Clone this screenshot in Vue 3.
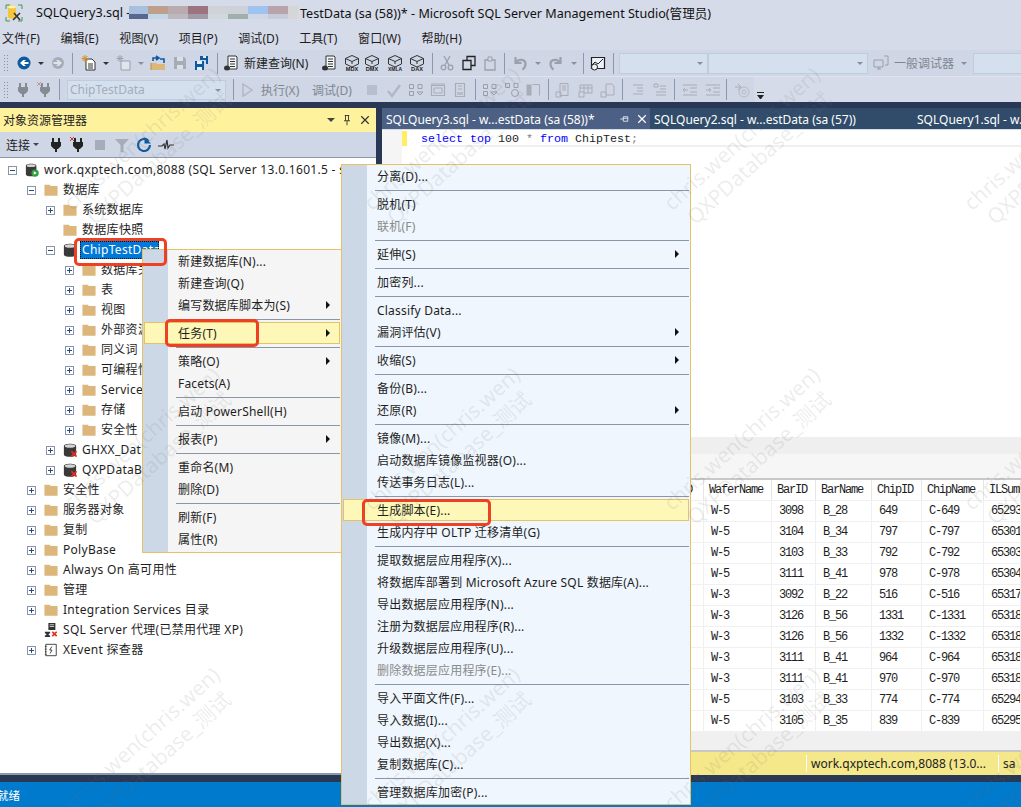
<template>
  <div class="ssms">
    <div class="titlebar">
      <svg class="app-icon" viewBox="0 0 18 18" v-html="icons.app"></svg>
      <span class="title-a">SQLQuery3.sql -</span>
      <span class="mosaic">
        <span v-for="(c, i) in mosaic" :key="i" class="mosaic-cell" :style="{ width: c[2] + 'px' }">
          <i :style="{ background: c[0] }"></i><i :style="{ background: c[1] }"></i>
        </span>
      </span>
      <span class="title-b">TestData (sa (58))* - Microsoft SQL Server Management Studio(管理员)</span>
    </div>

    <div class="menubar">
      <span v-for="m in mainMenu" :key="m">{{ m }}</span>
    </div>

    <div class="toolbar tb1">
      <template v-for="(item, i) in toolbar1" :key="i">
        <span v-if="item.t === 'grip'" class="grip"></span>
        <span v-else-if="item.t === 'sep'" class="tsep" :style="{ width: item.w + 'px' }"><b></b></span>
        <span v-else-if="item.t === 'drop'" class="tdrop" :class="{ off: item.off }" :style="{ width: item.w + 'px' }"></span>
        <span v-else-if="item.t === 'gap'" :style="{ width: item.w + 'px' }"></span>
        <span v-else-if="item.t === 'combo'" class="combo" :style="{ width: item.w + 'px' }"><em v-if="item.arrow"></em></span>
        <span v-else-if="item.t === 'label'" class="tlabel" :class="{ off: item.off }" :style="{ width: item.w + 'px' }">{{ item.text }}</span>
        <span v-else class="ticon" :class="{ off: item.off }" :style="{ width: item.w + 'px' }">
          <svg viewBox="0 0 16 16" v-html="icons[item.n]"></svg>
        </span>
      </template>
    </div>

    <div class="tb2-row">
      <div class="toolbar tb2">
        <template v-for="(item, i) in toolbar2" :key="i">
          <span v-if="item.t === 'grip'" class="grip"></span>
          <span v-else-if="item.t === 'sep'" class="tsep" :style="{ width: item.w + 'px' }"><b></b></span>
          <span v-else-if="item.t === 'gap'" :style="{ width: item.w + 'px' }"></span>
          <span v-else-if="item.t === 'combo'" class="combo db-combo" :style="{ width: item.w + 'px' }">ChipTestData<em></em></span>
          <span v-else-if="item.t === 'label'" class="tlabel off" :style="{ width: item.w + 'px' }">{{ item.text }}</span>
          <span v-else class="ticon off" :style="{ width: item.w + 'px' }">
            <svg viewBox="0 0 16 16" v-html="icons[item.n]"></svg>
          </span>
        </template>
      </div>
      <span class="overflow-btn"></span>
    </div>

    <div class="band-top"></div>

    <div class="main">
      <section class="explorer">
        <header class="ex-head">
          <span>对象资源管理器</span>
          <span class="ex-tools">
            <i class="mini-drop"></i>
            <svg viewBox="0 0 16 16" v-html="icons.pin"></svg>
            <svg viewBox="0 0 16 16" v-html="icons.close"></svg>
          </span>
        </header>
        <div class="ex-bar">
          <span class="ex-connect">连接</span>
          <i class="mini-drop small"></i>
          <span v-for="b in explorerBar" :key="b.n" class="ticon" :class="{ off: b.off }" :style="{ width: b.w + 'px' }">
            <svg viewBox="0 0 16 16" v-html="icons[b.n]"></svg>
          </span>
        </div>
        <div class="tree">
          <div v-for="row in tree" :key="row.text" class="tree-row" :style="{ paddingLeft: 8 + row.level * 19 + 'px' }">
            <span class="exp" :class="row.exp"></span>
            <svg class="tree-icon" viewBox="0 0 16 16" v-html="icons[row.icon || 'folder']"></svg>
            <span class="tree-text" :class="{ selected: row.selected }">{{ row.text }}</span>
          </div>
        </div>
      </section>

      <section class="doc">
        <div class="tabs">
          <div class="tab active">
            <span>SQLQuery3.sql - w...estData (sa (58))*</span>
            <svg viewBox="0 0 16 16" v-html="icons.pinSide"></svg>
            <svg viewBox="0 0 16 16" v-html="icons.closeWhite"></svg>
          </div>
          <div class="tab t2"><span>SQLQuery2.sql - w...estData (sa (57))</span></div>
          <div class="tab t3"><span>SQLQuery1.sql - w...estData (sa (56))</span></div>
        </div>
        <div class="editor">
          <div class="margin"><i></i></div>
          <div class="code-wrap">
            <div class="code"><b>select</b> <b>top</b> 100 <u>*</u> <b>from</b> ChipTest<u>;</u></div>
          </div>
        </div>
        <div class="results">
          <div class="res-tabs"></div>
          <div class="res-msg"></div>
          <div class="grid">
            <div class="grid-row head">
              <span class="first">ID</span>
              <span v-for="h in gridHead" :key="h">{{ h }}</span>
            </div>
            <div v-for="(r, i) in gridRows" :key="i" class="grid-row">
              <span class="first"></span>
              <span v-for="(c, j) in r" :key="j">{{ c }}</span>
            </div>
          </div>
          <div class="res-foot"></div>
        </div>
        <div class="qstatus">
          <span class="q-conn">work.qxptech.com,8088 (13.0...</span>
          <span class="q-user">sa</span>
        </div>
      </section>
    </div>

    <div class="band-bottom"></div>
    <div class="statusbar">就绪</div>

    <div class="menu menu-db">
      <template v-for="(m, i) in dbMenu" :key="i">
        <div v-if="m === '-'" class="mi-sep"></div>
        <div v-else class="mi" :class="{ hot: m.hot }">
          <span>{{ m.text }}</span><i v-if="m.sub"></i>
        </div>
      </template>
    </div>

    <div class="menu menu-task">
      <template v-for="(m, i) in taskMenu" :key="i">
        <div v-if="m === '-'" class="mi-sep"></div>
        <div v-else class="mi" :class="{ hot: m.hot, off: m.off }">
          <span>{{ m.text }}</span><i v-if="m.sub"></i>
        </div>
      </template>
    </div>

    <div class="mark m1"></div>
    <div class="mark m2"></div>
    <div class="mark m3"></div>

    <div class="marks">
      <div v-for="w in watermarks" :key="w.x + '-' + w.y" class="wm" :style="{ left: w.x + 'px', top: w.y + 'px' }">
        <div>chris.wen(chris.wen)</div>
        <div>QXPDatabase_测试</div>
      </div>
    </div>
  </div>
</template>

<script setup>
const cube = (label) => `<path d="M8 .5 1.500 3.500v5.500l6.500 3 6.500-3V3.500z" fill="none" stroke="#333"/><path d="M1.500 3.500 8 6.500l6.500-3M8 6.500V9" fill="none" stroke="#333"/><text x="8" y="16" text-anchor="middle" font-family="Liberation Sans" font-weight="700" font-size="${label.length > 3 ? 5 : 5.6}" fill="#222">${label}</text>`
const plug = '<path d="M5 1v4M11 1v4" stroke="#222" stroke-width="2"/><path d="M3 5h10v4l-3 3H6L3 9z" fill="#222"/><path d="M7 12h2v3H7z" fill="#222"/>'

const icons = {
  app: '<path d="M1 1h4M1 1v4M13 1h4M17 1v4M1 13v4h4M17 13v4h-4" fill="none" stroke="#3f9b3f" stroke-width="1"/><path d="M3 3c0-2 8-2 8 0v10c0 2-8 2-8 0z" fill="#f6c53c"/><ellipse cx="7" cy="3" rx="4" ry="1.3" fill="#fff2b5"/><path d="M8 16l7-7M9 9l6 7" stroke="#333" stroke-width="1.6"/>',
  back: '<circle cx="8" cy="8" r="6.5" fill="#0e5a9e"/><path d="M12.5 7H8l2-2H7.4L4 8l3.4 3H10L8 9h4.5z" fill="#fff"/>',
  forward: '<circle cx="8" cy="8" r="6" fill="#9aa0aa"/><path d="M3.5 7H8L6 5h2.6L12 8l-3.4 3H6l2-2H3.5z" fill="#e8e8e8"/>',
  newproj: '<path d="M5 4h6l3 3v8H5z" fill="#fff" stroke="#333"/><path d="M7 9h5M7 11h5M7 13h5" stroke="#333"/><path d="M4 0v7M.5 3.500h7M1.500 1l5 5M6.500 1l-5 5" stroke="#d98b1c"/>',
  newgray: '<path d="M5 6h9v9H5z" fill="#e6e9f0" stroke="#8a8f99"/><path d="M4 0v7M.5 3.500h7M1.500 1l5 5M6.500 1l-5 5" stroke="#8a8f99"/>',
  open: '<path d="M1 8h5l1 1h8v6H1z" fill="#dcb67a"/><path d="M1 8v7" stroke="#b9914f"/><path d="M3 6V3h6M6 1 9 3 6 5" fill="none" stroke="#0e5a9e" stroke-width="1.6"/><path d="M10 4h4v4" fill="none" stroke="#0e5a9e" stroke-width="1.6"/>',
  save: '<path d="M2 2h10l2 2v10H2z" fill="#9aa0aa"/><path d="M5 2h6v4H5zM5 10h6v4H5z" fill="#e0e3ea"/>',
  saveall: '<path d="M6 1h8v8H12V5H6z" fill="#0e5a9e"/><path d="M1 6h9v9H1z" fill="#0e5a9e"/><path d="M3 6h5v3H3zM3 12h5v3H3z" fill="#e8ecf5"/><path d="M9 1h3v2H9z" fill="#e8ecf5"/>',
  query: '<path d="M5 1h8l1 1v12H5z" fill="#f4f6fa" stroke="#333"/><path d="M7 4h5M7 6.500h5M7 9h5M7 11.500h5" stroke="#333"/><ellipse cx="4" cy="13" rx="3" ry="2.500" fill="#333"/>',
  mdx: cube('MDX'), dmx: cube('DMX'), xmla: cube('XMLA'), dax: cube('DAX'),
  cut: '<path d="M5 1l5 9M11 1 6 10" stroke="#8a8f99" stroke-width="1.3" fill="none"/><circle cx="4.500" cy="12.500" r="2.300" fill="none" stroke="#8a8f99" stroke-width="1.300"/><circle cx="11.500" cy="12.500" r="2.300" fill="none" stroke="#8a8f99" stroke-width="1.300"/>',
  copy: '<path d="M6 1.500h8v9H6z" fill="none" stroke="#222" stroke-width="1.300"/><path d="M2 5.500h8v9H2z" fill="#d0d7e5" stroke="#222" stroke-width="1.300"/>',
  paste: '<path d="M3 5h10v10H3z" fill="none" stroke="#8a8f99" stroke-width="1.300"/><path d="M6 2h4v4H6z" fill="#d0d7e5" stroke="#8a8f99"/>',
  undo: '<path d="M3.500 2v6h6" fill="none" stroke="#8a8f99" stroke-width="2.200"/><path d="M4 8C6 3.500 13.500 4 13.500 9c0 2-1 4-3 5.500" fill="none" stroke="#8a8f99" stroke-width="2.200"/>',
  redo: '<path d="M12.500 2v6h-6" fill="none" stroke="#8a8f99" stroke-width="2.200"/><path d="M12 8C10 3.500 2.500 4 2.500 9c0 2 1 4 3 5.500" fill="none" stroke="#8a8f99" stroke-width="2.200"/>',
  monitor: '<path d="M1.500 2.500h13v11h-13z" fill="#eef1f7" stroke="#222" stroke-width="1.200"/><path d="M2 10l3-3 3 2 5-5" fill="none" stroke="#222"/><circle cx="4.500" cy="12" r="3" fill="#eef1f7" stroke="#222"/>',
  debugpc: '<path d="M1 5h9v7H1z" fill="none" stroke="#8a8f99"/><path d="M4 14h4M6 12v2" stroke="#8a8f99"/><path d="M11 1h4v9h-3" fill="none" stroke="#8a8f99"/>',
  plug,
  plugx: plug + '<path d="M0 0l4 4M4 0 0 4" stroke="#c0392b"/>',
  play: '<path d="M4 2l9 6-9 6z" fill="none" stroke="#8a8f99" stroke-width="1.500"/>',
  stop: '<path d="M3 3h10v10H3z" fill="#9aa0aa"/>',
  check: '<path d="M2 9l4 5 8-11" fill="none" stroke="#8a8f99" stroke-width="2.400"/>',
  tree1: '<path d="M1.500 2.500h4v4h-4zM10 2.500h4v4h-4zM1.500 9.500h4v4h-4z" fill="none" stroke="#555"/><path d="M9 10l3 3 3-3z" fill="none" stroke="#555"/>',
  win: '<path d="M1.500 3.500h13v10h-13z" fill="none" stroke="#777" stroke-width="1.200"/><path d="M4 6h8v5H4z" fill="none" stroke="#777"/><path d="M1 2h14" stroke="#777"/>',
  page: '<path d="M3.500 1.500h9v13h-9z" fill="none" stroke="#777" stroke-width="1.200"/><path d="M6 4h4M6 7h4" stroke="#777"/><path d="M5 10h6v3H5z" fill="#999"/>',
  treeC: '<path d="M1.500 1.500h4v4h-4zM10 1.500h4v4h-4z" fill="none" stroke="#555"/><circle cx="11" cy="11" r="3.500" fill="none" stroke="#555"/>',
  table: '<path d="M1.500 2.500h5v11h-5z" fill="#777"/><path d="M7.500 2.500h7v11" fill="none" stroke="#777"/>',
  qdoc: '<path d="M5 1.500h8v12H5z" fill="none" stroke="#777"/><path d="M7 4h4M7 6h4M7 8h4" stroke="#777"/><path d="M1 10h5v5H1z" fill="none" stroke="#777"/>',
  qgrid: '<path d="M2 3h12v8H2z" fill="none" stroke="#777"/><path d="M2 6h12M6 3v8M10 3v8" stroke="#777"/><path d="M1 10h5v5H1z" fill="#d0d7e5" stroke="#777"/>',
  qfile: '<path d="M6 2h6l2 2v9H6z" fill="none" stroke="#777"/><path d="M1 10h5v5H1z" fill="#d0d7e5" stroke="#777"/>',
  lines: '<path d="M3 3h10M7 6h6M7 9h6M3 12h10" stroke="#777"/>',
  lines2: '<path d="M2 2h4v3H2zM8 4h6M8 7h6M4 10h10M4 13h10" stroke="#777" fill="none"/>',
  indentL: '<path d="M1 3h14M1 13h14M8 6h7M8 10h7" stroke="#777"/><path d="M6 8H1m2-2L1 8l2 2" fill="none" stroke="#777"/>',
  indentR: '<path d="M1 3h14M1 13h14M8 6h7M8 10h7" stroke="#777"/><path d="M1 8h5M4 6l2 2-2 2" fill="none" stroke="#777"/>',
  at: '<path d="M1 5h5M4 2l3 3-3 3" fill="none" stroke="#777"/><circle cx="10" cy="10" r="5" fill="none" stroke="#999"/><circle cx="10" cy="10" r="2" fill="none" stroke="#999"/>',
  pin: '<path d="M5 2h6M6 2v7M10 2v7M4 9h8M8 9v6" fill="none" stroke="#333" stroke-width="1.200"/>',
  pinSide: '<path d="M3 8h4M7 5v6h6V5zM7 7h6" fill="none" stroke="#fff"/>',
  close: '<path d="M3 3l10 10M13 3 3 13" stroke="#333" stroke-width="1.600"/>',
  closeWhite: '<path d="M3 3l10 10M13 3 3 13" stroke="#fff" stroke-width="1.600"/>',
  funnel: '<path d="M1 2h14L9.500 8v7h-3V8z" fill="#9aa0aa"/>',
  refresh: '<path d="M12.500 4A6 6 0 1 0 14 8" fill="none" stroke="#0e5a9e" stroke-width="2.200"/><path d="M8.500 0v6.500H15z" fill="#0e5a9e"/>',
  pulse: '<path d="M0 9h4l2-2 1 5 2-9 1 8 2-3h4" fill="none" stroke="#333" stroke-width="1.200"/>',
  folder: '<path d="M.5 2h6l1.500 1.500h7.500v11H.5z" fill="#dcb67a"/>',
  db: '<path d="M1 3.500C1 0 15 0 15 3.500v9.500c0 3.500-14 3.500-14 0z" fill="#3a3a3a"/><ellipse cx="8" cy="3.500" rx="6" ry="2" fill="#d4d4d4"/>',
  dbx: '<path d="M1 3.500C1 0 15 0 15 3.500v9.500c0 3.500-14 3.500-14 0z" fill="#3a3a3a"/><ellipse cx="8" cy="3.500" rx="6" ry="2" fill="#d4d4d4"/><path d="M9.500 9.500l6 6M15.500 9.500l-6 6" stroke="#e0301e" stroke-width="2"/>',
  server: '<path d="M1 3C1 0 13 0 13 3v10c0 3-12 3-12 0z" fill="#3a3a3a"/><ellipse cx="7" cy="3" rx="5" ry="1.700" fill="#d4d4d4"/><circle cx="11.500" cy="11.500" r="4.200" fill="#2e9e3e"/><path d="M10 9.500l3.500 2-3.500 2z" fill="#fff"/>',
  agent: '<path d="M5 0h8v8H5z" fill="#333"/><path d="M6.500 2h5M6.500 4h5" stroke="#ddd"/><path d="M1 10h6v1.500L5 13l2 1.500V16H1v-1.500L3 13l-2-1.500z" fill="#333"/><path d="M9.500 10l5 5M14.500 10l-5 5" stroke="#e0301e" stroke-width="2"/>',
  xevent: '<path d="M2 1.500h12v13H2z" fill="#fff" stroke="#333"/><path d="M1 4h2M1 7h2M1 10h2M1 13h2" stroke="#333"/><path d="M9 4 6.500 8H9l-2 4" fill="none" stroke="#333"/>',
}

const mosaic = [
  ['#a9bfe0', '#55698f', 19], ['#be9f8c', '#c3d6e5', 20], ['#b9abb0', '#bcb8bd', 20], ['#9c7481', '#a39aa8', 20],
  ['#cfd3d8', '#d0d8dc', 20], ['#cdd2d8', '#9fb0aa', 20], ['#9dc3ee', '#cfd6e7', 20], ['#b8a5ac', '#c8cbd8', 20],
  ['#d6d6d6', '#d6d6d6', 10],
]

const mainMenu = ['文件(F)', '编辑(E)', '视图(V)', '项目(P)', '调试(D)', '工具(T)', '窗口(W)', '帮助(H)']

const I = (n, w, off) => ({ t: 'i', n, w, off })
const S = (w) => ({ t: 'sep', w })
const G = (w) => ({ t: 'gap', w })
const D = (w, off) => ({ t: 'drop', w, off })

const toolbar1 = [
  { t: 'grip' }, I('back', 22), D(12), I('forward', 22, true), S(6), I('newproj', 27), D(8),
  I('newgray', 28, true), D(6, true), I('open', 28), I('save', 16, true), I('saveall', 28), S(2),
  I('query', 26), { t: 'label', text: '新建查询(N)', w: 67 }, I('query', 36), I('mdx', 10), I('dmx', 30), I('xmla', 16),
  I('dax', 28), S(2), I('cut', 28, true), I('copy', 16), I('paste', 26, true), S(2),
  I('undo', 30, true), D(6, true), I('redo', 30, true), D(6, true), S(12), I('monitor', 18), S(12),
  G(2), { t: 'combo', w: 89, arrow: true }, G(7), { t: 'combo', w: 160, arrow: true },
  I('debugpc', 26, true), { t: 'label', text: '一般调试器', w: 61, off: true }, D(18, true), { t: 'combo', w: 60 },
]

const toolbar2 = [
  { t: 'grip' }, I('plug', 20), I('plugx', 24), S(4), G(6), { t: 'combo', w: 159 }, S(14), I('play', 14),
  G(7), { t: 'label', text: '执行(X)', w: 39 }, G(12), { t: 'label', text: '调试(D)', w: 40 }, G(9),
  I('stop', 22), I('check', 22), I('tree1', 22), I('win', 22), I('page', 22), S(8),
  I('tree1', 22), I('treeC', 22), I('table', 20), S(10), I('qdoc', 20), I('qgrid', 26), I('qfile', 18), S(10),
  I('lines', 22), I('lines2', 22), S(6), I('indentL', 26), I('indentR', 20), S(6), I('at', 25),
]

const explorerBar = [
  { n: 'plug', w: 22 }, { n: 'plugx', w: 22 }, { n: 'stop', w: 22, off: true },
  { n: 'funnel', w: 22, off: true }, { n: 'refresh', w: 22 }, { n: 'pulse', w: 22 },
]

const tree = [
  { level: 0, exp: 'minus', icon: 'server', text: 'work.qxptech.com,8088 (SQL Server 13.0.1601.5 - sa)' },
  { level: 1, exp: 'minus', text: '数据库' },
  { level: 2, exp: 'plus', text: '系统数据库' },
  { level: 2, exp: '', text: '数据库快照' },
  { level: 2, exp: 'minus', icon: 'db', text: 'ChipTestData', selected: true },
  { level: 3, exp: 'plus', text: '数据库关系图' },
  { level: 3, exp: 'plus', text: '表' },
  { level: 3, exp: 'plus', text: '视图' },
  { level: 3, exp: 'plus', text: '外部资源' },
  { level: 3, exp: 'plus', text: '同义词' },
  { level: 3, exp: 'plus', text: '可编程性' },
  { level: 3, exp: 'plus', text: 'Service Broker' },
  { level: 3, exp: 'plus', text: '存储' },
  { level: 3, exp: 'plus', text: '安全性' },
  { level: 2, exp: 'plus', icon: 'dbx', text: 'GHXX_Data' },
  { level: 2, exp: 'plus', icon: 'dbx', text: 'QXPDataBase' },
  { level: 1, exp: 'plus', text: '安全性 ' },
  { level: 1, exp: 'plus', text: '服务器对象' },
  { level: 1, exp: 'plus', text: '复制' },
  { level: 1, exp: 'plus', text: 'PolyBase' },
  { level: 1, exp: 'plus', text: 'Always On 高可用性' },
  { level: 1, exp: 'plus', text: '管理' },
  { level: 1, exp: 'plus', text: 'Integration Services 目录' },
  { level: 1, exp: '', icon: 'agent', text: 'SQL Server 代理(已禁用代理 XP)' },
  { level: 1, exp: 'plus', icon: 'xevent', text: 'XEvent 探查器' },
]

const dbMenu = [
  { text: '新建数据库(N)...' }, { text: '新建查询(Q)' }, { text: '编写数据库脚本为(S)', sub: true }, '-',
  { text: '任务(T)', sub: true, hot: true }, '-',
  { text: '策略(O)', sub: true }, { text: 'Facets(A)' }, '-',
  { text: '启动 PowerShell(H)' }, '-',
  { text: '报表(P)', sub: true }, '-',
  { text: '重命名(M)' }, { text: '删除(D)' }, '-',
  { text: '刷新(F)' }, { text: '属性(R)' },
]

const taskMenu = [
  { text: '分离(D)...' }, '-',
  { text: '脱机(T)' }, { text: '联机(F)', off: true }, '-',
  { text: '延伸(S)', sub: true }, '-',
  { text: '加密列...' }, '-',
  { text: 'Classify Data...' }, { text: '漏洞评估(V)', sub: true }, '-',
  { text: '收缩(S)', sub: true }, '-',
  { text: '备份(B)...' }, { text: '还原(R)', sub: true }, '-',
  { text: '镜像(M)...' }, { text: '启动数据库镜像监视器(O)...' }, { text: '传送事务日志(L)...' }, '-',
  { text: '生成脚本(E)...', hot: true }, { text: '生成内存中 OLTP 迁移清单(G)' }, '-',
  { text: '提取数据层应用程序(X)...' }, { text: '将数据库部署到 Microsoft Azure SQL 数据库(A)...' },
  { text: '导出数据层应用程序(N)...' }, { text: '注册为数据层应用程序(R)...' }, { text: '升级数据层应用程序(U)...' },
  { text: '删除数据层应用程序(E)...', off: true }, '-',
  { text: '导入平面文件(F)...' }, { text: '导入数据(I)...' }, { text: '导出数据(X)...' }, { text: '复制数据库(C)...' }, '-',
  { text: '管理数据库加密(P)...' },
]

const gridHead = ['WaferName', 'BarID', 'BarName', 'ChipID', 'ChipName', 'ILSummary']
const gridRows = [
  ['W-5', '3098', 'B_28', '649', 'C-649', '65293'],
  ['W-5', '3104', 'B_34', '797', 'C-797', '65301'],
  ['W-5', '3103', 'B_33', '792', 'C-792', '65303'],
  ['W-5', '3111', 'B_41', '978', 'C-978', '65304'],
  ['W-3', '3092', 'B_22', '516', 'C-516', '65317'],
  ['W-3', '3126', 'B_56', '1331', 'C-1331', '65318'],
  ['W-3', '3126', 'B_56', '1332', 'C-1332', '65318'],
  ['W-3', '3111', 'B_41', '964', 'C-964', '65318'],
  ['W-3', '3111', 'B_41', '970', 'C-970', '65318'],
  ['W-5', '3103', 'B_33', '774', 'C-774', '65294'],
  ['W-5', '3105', 'B_35', '839', 'C-839', '65295'],
]

const watermarks = []
for (const y of [148, 448, 748]) {
  for (const x of [150, 450, 750, 1050]) watermarks.push({ x, y })
}
</script>

<style>
html, body {
  margin: 0;
  overflow: hidden;
}
</style>

<style scoped>
.ssms {
  position: relative;
  width: 1021px;
  height: 807px;
  overflow: hidden;
  display: flex;
  flex-direction: column;
  background: #d6dbe9;
  color: #1e1e1e;
  font-family: "Noto Sans", "Noto Sans CJK SC", sans-serif;
  font-size: 12px;
}

.titlebar {
  height: 25px;
  display: flex;
  align-items: center;
  flex-shrink: 0;
  font-size: 12.6px;
  color: #111;
}

.app-icon {
  width: 18px;
  height: 18px;
  margin: 0 13px 0 5px;
}

.title-a {
  white-space: pre;
  width: 93px;
}

.mosaic {
  display: flex;
  height: 13px;
}

.mosaic-cell {
  display: flex;
  flex-direction: column;
}

.mosaic-cell i:first-child {
  height: 8px;
}

.mosaic-cell i:last-child {
  height: 5px;
}

.title-b {
  white-space: pre;
  margin-left: 2px;
}

.menubar {
  height: 25px;
  display: flex;
  align-items: center;
  gap: 20.500px;
  padding-left: 2px;
  flex-shrink: 0;
  letter-spacing: 0.1px;
}

.toolbar {
  display: flex;
  align-items: center;
  background: #cfd6e5;
  flex-shrink: 0;
}

.tb1 {
  height: 26px;
  border-bottom: 1px solid #dfe3ee;
}

.tb2-row {
  height: 25px;
  display: flex;
  flex-shrink: 0;
}

.tb2 {
  width: 754px;
  height: 25px;
}

.overflow-btn {
  width: 7px;
  height: 6px;
  margin: 15px 0 0 3px;
  border-top: 1px solid #222;
}

.overflow-btn::after {
  content: "";
  display: block;
  margin-top: 2px;
  border-left: 3.500px solid transparent;
  border-right: 3.500px solid transparent;
  border-top: 4px solid #222;
}

.grip {
  width: 6px;
  height: 18px;
  margin: 0 4px 0 3px;
  flex-shrink: 0;
  background: radial-gradient(circle, #8a93a5 0.8px, transparent 1px) 0 0 / 3px 3px;
}

.tsep {
  display: flex;
  justify-content: center;
  height: 21px;
  flex-shrink: 0;
}

.tsep b {
  width: 1px;
  height: 100%;
  flex-shrink: 0;
  background: #8d98ad;
}

.ticon {
  display: flex;
  justify-content: center;
  flex-shrink: 0;
}

.ticon svg {
  width: 16px;
  height: 16px;
  flex-shrink: 0;
}

.ticon.off svg {
  opacity: 0.75;
}

.tb2 .ticon.off svg {
  opacity: 0.42;
}

.tdrop {
  display: flex;
  justify-content: center;
  flex-shrink: 0;
}

.tdrop::before {
  content: "";
  border-left: 3px solid transparent;
  border-right: 3px solid transparent;
  border-top: 3px solid #333;
}

.tdrop.off::before {
  border-top-color: #8a8f99;
}

.tlabel {
  flex-shrink: 0;
  white-space: nowrap;
}

.tlabel.off {
  color: #808691;
}

.combo {
  height: 21px;
  flex-shrink: 0;
  position: relative;
  box-sizing: border-box;
  border: 1px solid #bfccdd;
  background: #d5e0ee;
  color: #a4acb8;
  line-height: 19px;
  padding-left: 2px;
}

.combo em {
  position: absolute;
  right: 4px;
  top: 8px;
  border-left: 3px solid transparent;
  border-right: 3px solid transparent;
  border-top: 3px solid #8a8f99;
}

.tb2 .combo {
  height: 20px;
  line-height: 18px;
}

.band-top {
  height: 6px;
  background: #293955;
  flex-shrink: 0;
}

.main {
  height: 667px;
  display: flex;
  gap: 6px;
  background: #293955;
  flex-shrink: 0;
}

.explorer {
  width: 376px;
  display: flex;
  flex-direction: column;
  flex-shrink: 0;
}

.ex-head {
  height: 24px;
  display: flex;
  align-items: center;
  justify-content: space-between;
  padding: 0 3px;
  box-sizing: border-box;
  background: #fff29d;
  flex-shrink: 0;
}

.ex-tools {
  display: flex;
  align-items: center;
  gap: 6px;
  padding-right: 2px;
}

.ex-tools svg {
  width: 12px;
  height: 12px;
}

.mini-drop {
  border-left: 4px solid transparent;
  border-right: 4px solid transparent;
  border-top: 4px solid #444;
}

.mini-drop.small {
  border-left-width: 3px;
  border-right-width: 3px;
  border-top-width: 3px;
  margin: 0 6px 0 3px;
}

.ex-bar {
  height: 26px;
  display: flex;
  align-items: center;
  box-sizing: border-box;
  padding-left: 6px;
  background: #cfd6e5;
  border-bottom: 1px solid #8d98ad;
  flex-shrink: 0;
}

.tree {
  flex: 1;
  background: #fff;
  padding-top: 2px;
  overflow: hidden;
  border-bottom: 2px solid #8d98ad;
}

.tree-row {
  height: 20px;
  display: flex;
  align-items: center;
  white-space: nowrap;
}

.exp {
  width: 9px;
  height: 9px;
  margin-right: 8px;
  flex-shrink: 0;
  box-sizing: border-box;
}

.exp.plus,
.exp.minus {
  border: 1px solid #8794ac;
  background: linear-gradient(#2c4a78, #2c4a78) center / 5px 1px no-repeat, #fff;
}

.exp.plus {
  background: linear-gradient(#2c4a78, #2c4a78) center / 5px 1px no-repeat,
    linear-gradient(#2c4a78, #2c4a78) center / 1px 5px no-repeat, #fff;
}

.tree-icon {
  width: 14px;
  height: 14px;
  flex-shrink: 0;
  margin-right: 3px;
}

.tree-text {
  padding: 0 2px;
  line-height: 18px;
  letter-spacing: 0.3px;
}

.tree-text.selected {
  background: #0078d7;
  color: #fff;
  outline: 1px dotted #111;
  outline-offset: -1px;
  width: 75px;
  overflow: hidden;
}

.doc {
  flex: 1;
  min-width: 0;
  display: flex;
  flex-direction: column;
  background: #fff;
}

.tabs {
  height: 21px;
  display: flex;
  background: #304c6a;
  color: #fff;
  flex-shrink: 0;
}

.tab {
  display: flex;
  align-items: center;
  white-space: nowrap;
  flex-shrink: 0;
  padding: 1px 0 0 4px;
  box-sizing: border-box;
}

.tab svg {
  width: 12px;
  height: 12px;
}

.tab.active {
  width: 268px;
  background: #4b6084;
}

.tab.active span {
  width: 232px;
}

.tab.active svg + svg {
  margin-left: 6px;
}

.tab.t2 {
  width: 263px;
}

.editor {
  height: 307px;
  display: flex;
  flex-shrink: 0;
  border-top: 1px solid #d6dbe9;
}

.margin {
  width: 20px;
  background: #f5f5f5;
  flex-shrink: 0;
}

.margin i {
  display: block;
  width: 5px;
  height: 15px;
  margin: 1px 0 0 20px;
  background: #ffee62;
}

.code-wrap {
  flex: 1;
  padding-left: 19px;
}

.code {
  height: 14px;
  margin-top: 1px;
  border-bottom: 2px solid #eef1f0;
  font-family: "Liberation Mono", monospace;
  font-size: 11.67px;
  line-height: 17px;
  color: #222;
  white-space: pre;
}

.code b {
  font-weight: 400;
  color: #0000ff;
}

.code u {
  text-decoration: none;
  color: #808080;
}

.results {
  flex: 1;
  min-height: 0;
  display: flex;
  flex-direction: column;
}

.res-tabs {
  height: 17px;
  background: #efefef;
  flex-shrink: 0;
}

.res-msg {
  height: 26px;
  background: #f6f6f6;
  border-bottom: 2px solid #c8c8c8;
  box-sizing: border-box;
  flex-shrink: 0;
}

.grid {
  flex-shrink: 0;
  font-family: "Liberation Mono", monospace;
  font-size: 12px;
  letter-spacing: -1.2px;
  color: #1e1e1e;
}

.grid-row {
  height: 21px;
  display: grid;
  grid-template-columns: 322px 68px 44px 56px 50px 62px 1fr;
  box-sizing: border-box;
  border-bottom: 1px solid #f0f0f0;
}

.grid-row span {
  padding-left: 7px;
  line-height: 20px;
  border-right: 1px solid #f0f0f0;
  white-space: nowrap;
  overflow: hidden;
}

.grid-row.head span {
  padding-left: 5px;
  border-right-color: #e6e6e6;
}

.grid-row span.first {
  text-align: right;
  padding: 0 11px 0 0;
}

.res-foot {
  height: 18px;
  background: #f0f0f0;
  border-bottom: 2px solid #c8c8c8;
  flex-shrink: 0;
}

.qstatus {
  height: 23px;
  margin-top: 2px;
  display: flex;
  align-items: center;
  background: #f5e88a;
  flex-shrink: 0;
  color: #222;
  padding-left: 424px;
}

.q-conn {
  width: 192px;
  padding-left: 4px;
  box-sizing: border-box;
  border-left: 1px solid #fdfdfd;
  white-space: nowrap;
}

.q-user {
  padding-left: 4px;
  border-left: 1px solid #fdfdfd;
}

.band-bottom {
  height: 7px;
  background: #293955;
  flex-shrink: 0;
}

.statusbar {
  flex: 1;
  background: #007acc;
  color: #fff;
  line-height: 27px;
  text-indent: -3px;
  font-size: 11.5px;
}

.menu {
  position: absolute;
  box-sizing: border-box;
  border: 1px solid #e5c365;
  background: linear-gradient(#ccd8e6, #ccd8e6) no-repeat 0 0 / 25px 100%, #f5f5f5;
}

.menu-db {
  left: 142px;
  top: 249px;
  width: 200px;
  height: 304px;
}

.menu-task {
  left: 341px;
  top: 164px;
  width: 350px;
  height: 641px;
  background: linear-gradient(#ccd8e6, #ccd8e6) no-repeat 0 0 / 25px 100%, #eff6fd;
}

.mi {
  height: 22px;
  margin: 0 1px;
  padding-left: 34px;
  box-sizing: border-box;
  display: flex;
  align-items: center;
  justify-content: space-between;
  white-space: nowrap;
  letter-spacing: 0.2px;
}

.mi i {
  margin-right: 10px;
  border-top: 4px solid transparent;
  border-bottom: 4px solid transparent;
  border-left: 4px solid #111;
}

.mi.off {
  color: #8a8a8a;
}

.mi.hot {
  background: #fdf8b8;
  outline: 1px solid #e5c365;
  outline-offset: -1px;
}

.mi-sep {
  height: 6px;
  margin-left: 33px;
  margin-right: 1px;
  background: linear-gradient(#8b97a8, #8b97a8) no-repeat 0 center / 100% 1px;
}

.mark {
  position: absolute;
  box-sizing: border-box;
  border: 3px solid #ee4022;
  border-radius: 5px;
}

.m1 {
  left: 74px;
  top: 238px;
  width: 93px;
  height: 28px;
}

.m2 {
  left: 165px;
  top: 319px;
  width: 94px;
  height: 28px;
}

.m3 {
  left: 362px;
  top: 499px;
  width: 129px;
  height: 27px;
}

.marks {
  position: absolute;
  inset: 0;
  pointer-events: none;
}

.wm {
  position: absolute;
  width: 260px;
  margin: -26px 0 0 -130px;
  transform: rotate(-42deg);
  text-align: center;
  font-size: 21px;
  line-height: 26px;
  color: rgba(110, 110, 110, 0.13);
  white-space: nowrap;
}
</style>
